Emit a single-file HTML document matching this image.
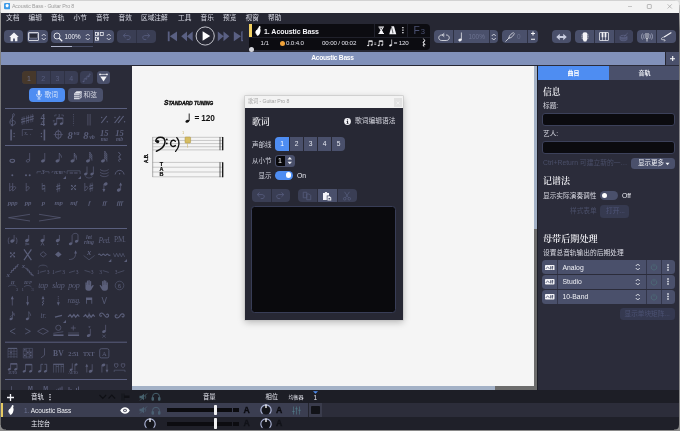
<!DOCTYPE html>
<html lang="zh-CN">
<head>
<meta charset="utf-8">
<title>Acoustic Bass - Guitar Pro 8</title>
<style>
*{box-sizing:border-box;margin:0;padding:0}
html,body{width:680px;height:431px;overflow:hidden;background:#262733}
body{position:relative;font-family:"Liberation Sans","Noto Sans CJK SC",sans-serif;font-size:7px;color:#e8e9f0;-webkit-font-smoothing:antialiased}
.abs,.abs-all *{position:absolute}
#app{position:absolute;left:0;top:0;width:680px;height:431px;overflow:hidden;will-change:transform}
#app div,#app span,#app svg{position:absolute}
.serif{font-family:"Liberation Serif","Noto Serif CJK SC",serif}
.t{white-space:nowrap;line-height:1}
/* title bar */
#titlebar{left:0;top:0;width:680px;height:12.500px;background:#f3f3f3;border-top:1px solid #d2d2d2}
/* toolbar */
#menubar{left:0;top:13px;width:680px;height:39px;background:#262733}
.btn{background:#4a506b;border-radius:4px;height:13px;top:30px}
.btn.dim{background:#3a3e54}
.sep{width:1px;background:#2e3143;top:30px;height:13px}
/* tab bar */
#tabbar{left:0;top:52px;width:665px;height:13px;background:#8191ba}
/* panels */
#left{left:0;top:65px;width:132px;height:325px;background:#2a2b38}
#score{left:132px;top:66px;width:402px;height:320px;background:#f5f5f5}
#right{left:537px;top:65px;width:143px;height:325px;background:#2b2c3a}
#bottom{left:0;top:390px;width:680px;height:41px;background:#1e1f27}
</style>
</head>
<body>
<div id="app">

<!-- ===== title bar ===== -->
<div id="titlebar">
  <svg style="left:3.800px;top:2.400px" width="6.300" height="6.300" viewBox="0 0 8 8"><rect width="8" height="8" rx="1.6" fill="#3d9be9"/><path d="M2 3.2a2 2 0 0 1 4 0c0 1-0.8 1.3-0.9 2.2H2.9C2.8 4.500 2 4.200 2 3.200z" fill="#fff"/></svg>
  <span class="t" style="left:12px;top:3.200px;font-size:5.300px;color:#9d9d9d;letter-spacing:-0.160px">Acoustic Bass - Guitar Pro 8</span>
  <svg style="left:620px;top:0" width="60" height="12" viewBox="0 0 60 12"><path d="M8 5.500h4" stroke="#b0b0b0" stroke-width="0.700" fill="none"/><rect x="27.300" y="3.500" width="4" height="4" rx="0.500" stroke="#a0a0a0" stroke-width="0.700" fill="none"/><path d="M47.600 3.300l4.200 4.200M51.800 3.300l-4.200 4.200" stroke="#a0a0a0" stroke-width="0.700" fill="none"/></svg>
</div>

<!-- ===== menu + toolbar ===== -->
<div id="menubar"></div>
<div id="menu" style="left:0;top:13px;width:340px;height:12px">
  <span class="t" style="left:6px;top:2.200px;font-size:6.700px;color:#d9dbe5">文档</span>
  <span class="t" style="left:28.5px;top:2.200px;font-size:6.700px;color:#d9dbe5">编辑</span>
  <span class="t" style="left:51px;top:2.200px;font-size:6.700px;color:#d9dbe5">音轨</span>
  <span class="t" style="left:73.5px;top:2.200px;font-size:6.700px;color:#d9dbe5">小节</span>
  <span class="t" style="left:96px;top:2.200px;font-size:6.700px;color:#d9dbe5">音符</span>
  <span class="t" style="left:118.5px;top:2.200px;font-size:6.700px;color:#d9dbe5">音效</span>
  <span class="t" style="left:141px;top:2.200px;font-size:6.700px;color:#d9dbe5">区域注解</span>
  <span class="t" style="left:178px;top:2.200px;font-size:6.700px;color:#d9dbe5">工具</span>
  <span class="t" style="left:200.5px;top:2.200px;font-size:6.700px;color:#d9dbe5">音乐</span>
  <span class="t" style="left:223px;top:2.200px;font-size:6.700px;color:#d9dbe5">预览</span>
  <span class="t" style="left:245.5px;top:2.200px;font-size:6.700px;color:#d9dbe5">视窗</span>
  <span class="t" style="left:268px;top:2.200px;font-size:6.700px;color:#d9dbe5">帮助</span>
</div>

<div id="toolbar" style="left:0;top:0;width:680px;height:52px">
  <!-- home -->
  <div class="btn" style="left:4px;width:19px"></div>
  <!-- layout -->
  <div class="btn" style="left:27px;width:21px"></div>
  <!-- zoom -->
  <div class="btn" style="left:51px;width:63px"></div>
  <div class="sep" style="left:93px"></div>
  <span class="t" style="left:64.500px;top:33.500px;font-size:6.300px;color:#f0f1f6">100%</span>
  <div style="left:51px;top:46px;width:21px;height:1px;background:#aeb4cc"></div>
  <div style="left:72px;top:46px;width:21px;height:1px;background:#454a62"></div>
  <!-- undo redo -->
  <div class="btn dim" style="left:117px;width:39px"></div>
  <div class="sep" style="left:136px"></div>
  <!-- loop / tempo -->
  <div class="btn" style="left:434px;width:64px"></div>
  <div class="sep" style="left:453px"></div>
  <div class="sep" style="left:489px"></div>
  <span class="t" style="left:468.500px;top:33.500px;font-size:6.400px;color:#6d7391">100%</span>
  <!-- tuning fork -->
  <div class="btn" style="left:502px;width:36px"></div>
  <div class="sep" style="left:527px"></div>
  <span class="t" style="left:517px;top:33.500px;font-size:6.400px;color:#6d7391">0</span>
  <!-- arrows -->
  <div class="btn" style="left:552px;width:19px"></div>
  <!-- instrument views -->
  <div class="btn" style="left:575px;width:58px"></div>
  <div class="sep" style="left:594px"></div>
  <div class="sep" style="left:614px"></div>
  <div style="left:615px;top:30px;width:18px;height:13px;background:#3e425a;border-radius:0 4px 4px 0"></div>
  <!-- tuner / line-in -->
  <div class="btn" style="left:637px;width:39px"></div>
  <div class="sep" style="left:656px"></div>

  <!-- toolbar icons -->
  <svg style="left:8.500px;top:31.500px" width="10" height="10" viewBox="0 0 20 20"><path d="M10 1L0.500 10h2.700v8.500h5V13h3.600v5.500h5V10h2.700z" fill="#f4f4f8"/></svg>
  <svg style="left:28px;top:32px" width="11" height="9" viewBox="0 0 22 18"><rect x="1" y="1" width="20" height="16" rx="1" stroke="#f4f4f8" stroke-width="1.600" fill="none"/><rect x="3.500" y="3.500" width="15" height="8.500" fill="#2a2c3a" stroke="#cfd2df" stroke-width="0.600"/></svg>
  <svg style="left:40.500px;top:32.500px" width="5.500" height="8" viewBox="0 0 11 16"><path d="M1.500 6l4-4 4 4M1.500 10l4 4 4-4" stroke="#f4f4f8" stroke-width="1.500" fill="none"/></svg>
  <svg style="left:52.500px;top:31.500px" width="10" height="10" viewBox="0 0 20 20"><circle cx="8" cy="8" r="6" stroke="#f4f4f8" stroke-width="1.700" fill="none"/><path d="M12.500 12.500l6 6" stroke="#f4f4f8" stroke-width="2.400"/></svg>
  <svg style="left:85px;top:32.500px" width="5.500" height="8" viewBox="0 0 11 16"><path d="M1.500 6l4-4 4 4M1.500 10l4 4 4-4" stroke="#f4f4f8" stroke-width="1.500" fill="none"/></svg>
  <svg style="left:95px;top:32px" width="9" height="9" viewBox="0 0 18 18"><rect x="1" y="1" width="6" height="6" stroke="#f4f4f8" stroke-width="1.500" fill="none"/><rect x="10.500" y="1" width="6" height="6" stroke="#f4f4f8" stroke-width="1.500" fill="none"/><rect x="1" y="10.500" width="6" height="6" stroke="#f4f4f8" stroke-width="1.500" fill="none"/><rect x="4" y="2.500" width="3" height="3" fill="#f4f4f8"/><rect x="4" y="12" width="3" height="3" fill="#f4f4f8"/></svg>
  <svg style="left:106px;top:32.500px" width="5.500" height="8" viewBox="0 0 11 16"><path d="M1.500 6l4-4 4 4M1.500 10l4 4 4-4" stroke="#f4f4f8" stroke-width="1.500" fill="none"/></svg>
  <svg style="left:121.500px;top:32px" width="10" height="9" viewBox="0 0 20 18"><path d="M7 3L2.500 7.200 7 11.500M3 7.200h9.500c5.500 0 5.500 8-0.500 8H9.500" stroke="#585e80" stroke-width="1.700" fill="none"/></svg>
  <svg style="left:141px;top:32px" width="10" height="9" viewBox="0 0 20 18"><path d="M13 3l4.500 4.200L13 11.500M17 7.200H7.500c-5.500 0-5.500 8 0.500 8h2.500" stroke="#585e80" stroke-width="1.700" fill="none"/></svg>
  <!-- transport -->
  <svg style="left:167px;top:30.500px" width="77" height="11" viewBox="0 0 77 11"><g fill="#5a6083"><rect x="0.800" y="0.500" width="1.800" height="9.700"/><path d="M10 0.500v9.700L2.800 5.350z"/><path d="M20 0.500v9.700L14.200 5.350zM25.700 0.500v9.700L19.900 5.350z"/><path d="M50.800 0.500v9.700L56.600 5.350zM56.500 0.500v9.700L62.300 5.350z"/><path d="M66.800 0.500v9.700L74 5.350z"/><rect x="74.200" y="0.500" width="1.800" height="9.700"/></g></svg>
  <svg style="left:195px;top:26px" width="20" height="20" viewBox="0 0 20 20"><circle cx="10.200" cy="10" r="9.100" stroke="#eceef4" stroke-width="0.800" fill="none"/><path d="M7.600 5.200v9.600l7.600-4.800z" fill="#fff"/></svg>
  <!-- loop -->
  <svg style="left:437.500px;top:31.500px" width="12" height="10" viewBox="0 0 24 20"><path d="M13 6H7.500C-0.500 6 -0.500 17 7.500 17h9c8 0 8-11 0-11h-0.500" stroke="#f4f4f8" stroke-width="1.500" fill="none"/><path d="M12.500 2.500L8.500 6l4 3.500" stroke="#f4f4f8" stroke-width="1.500" fill="none"/></svg>
  <svg style="left:458px;top:31.500px" width="6" height="10" viewBox="0 0 12 20"><ellipse cx="4" cy="16" rx="3.400" ry="2.600" transform="rotate(-20 4 16)" fill="#f4f4f8"/><path d="M6.800 16V1" stroke="#f4f4f8" stroke-width="1.400"/></svg>
  <svg style="left:491px;top:32.500px" width="5.500" height="8" viewBox="0 0 11 16"><path d="M1.500 6l4-4 4 4M1.500 10l4 4 4-4" stroke="#f4f4f8" stroke-width="1.500" fill="none"/></svg>
  <!-- fork -->
  <svg style="left:504.500px;top:31.500px" width="10" height="10" viewBox="0 0 20 20"><path d="M1.500 18.500L8 12M8 12c-1-3 3-8 8.500-10.500M8 12c3 1 8-3 10.500-8.500" stroke="#f4f4f8" stroke-width="1.500" fill="none" stroke-linecap="round"/></svg>
  <svg style="left:529.500px;top:31px" width="6" height="11" viewBox="0 0 12 22"><path d="M6 1v8M2 5h8M2 16.500h8" stroke="#f4f4f8" stroke-width="2.200"/></svg>
  <!-- arrows -->
  <svg style="left:556px;top:32.500px" width="11" height="8" viewBox="0 0 22 16"><path d="M0.500 8l7-6.500v4.300h7V1.500L21.500 8l-7 6.500v-4.300h-7v4.300z" fill="#c9cde0"/></svg>
  <!-- guitar head -->
  <svg style="left:580.500px;top:31.500px" width="8" height="10" viewBox="0 0 16 20"><path d="M4 1.500c2.500-1.500 5.500-1.500 8 0l1 3.500c-1 3-1 6 0 8.500l-2.500 5.500h-5L3 13.500c1-2.500 1-5.500 0-8.500z" fill="#f4f4f8"/><path d="M1 6h2M1 9h2M1 12h2M13 6h2M13 9h2M13 12h2" stroke="#f4f4f8" stroke-width="1.300"/></svg>
  <svg style="left:599px;top:32px" width="10" height="9" viewBox="0 0 20 18"><rect x="1" y="1" width="18" height="16" rx="1" stroke="#f4f4f8" stroke-width="1.500" fill="none"/><path d="M7 1v16M13 1v16" stroke="#f4f4f8" stroke-width="1.200"/><rect x="5.300" y="1" width="3.400" height="9.500" fill="#f4f4f8"/><rect x="11.300" y="1" width="3.400" height="9.500" fill="#f4f4f8"/></svg>
  <svg style="left:618.500px;top:31.500px" width="10" height="10" viewBox="0 0 20 20"><ellipse cx="9" cy="9.500" rx="7" ry="3" stroke="#5e6487" stroke-width="1.400" fill="none"/><path d="M2 9.500v5c0 4 14 4 14 0v-5" stroke="#5e6487" stroke-width="1.400" fill="#5e6487" fill-opacity="0.500"/><path d="M10 9l7.500-7" stroke="#5e6487" stroke-width="1.400"/></svg>
  <!-- tuner -->
  <svg style="left:640.500px;top:31.500px" width="12" height="10" viewBox="0 0 24 20"><path d="M10 2v9.500a2 2 0 0 0 4 0V2M12 13.500V19" stroke="#f4f4f8" stroke-width="1.500" fill="none"/><path d="M6.500 4.500c-1.500 2.500-1.500 6.500 0 9M3 3c-2.500 3.500-2.500 8.500 0 12M17.500 4.500c1.500 2.500 1.500 6.500 0 9M21 3c2.500 3.500 2.500 8.500 0 12" stroke="#c9cde0" stroke-width="1.200" fill="none"/></svg>
  <svg style="left:660px;top:31.500px" width="12" height="10" viewBox="0 0 24 20"><path d="M22 1.500L9 9.500" stroke="#f4f4f8" stroke-width="2.200" stroke-linecap="round"/><path d="M9.500 9.500c-4 1-7 2.500-7 4.500 0 2.500 6 0.500 7.500 2 1 1-0.500 2.500-2.500 2" stroke="#f4f4f8" stroke-width="1.300" fill="none"/></svg>
  <!-- tab + -->
</div>

<!-- ===== LCD ===== -->
<div id="lcd" style="left:249px;top:24px;width:181px;height:26px;background:#0c0c11;border-radius:0 4px 4px 0">
  <div style="left:0;top:0;width:2.500px;height:12.500px;background:#f2d060"></div>
  <div style="left:0;top:13px;width:181px;height:1px;background:#20212b"></div>
  <div style="left:125px;top:0;width:1px;height:13px;background:#20212b"></div>
  <div style="left:158px;top:0;width:1px;height:13px;background:#20212b"></div>

  <svg style="left:6px;top:1.500px" width="6" height="10" viewBox="0 0 12 20"><path d="M8.500 0.300c1.400-0.300 2.600 0.600 2.500 2l-0.700 3c1.200 2 1 4.600 0.400 6.800-0.600 2.400-1.400 4.400-2.800 6-1.200 1.300-3 1.500-4.400 0.800l0.900-1.500-2.400 0.300 1.200-2-2.600 0.100 1.500-2-2.300-0.300 2-1.800-1.800-0.700 2.600-1.400-1-1 2.800-0.900 0.600-2.400 1.800-1.200 0.400-2.300z" fill="#fff"/></svg>
  <svg style="left:128.500px;top:2px" width="6.500" height="8.500" viewBox="0 0 13 17"><path d="M1 0.800h11v2.400H1zM1 13.800h11v2.400H1z" fill="#f4f4f8"/><path d="M2.500 3.200h8c0 3-2.500 4-2.500 5.300s2.500 2.300 2.500 5.300h-8c0-3 2.500-4 2.500-5.300S2.500 6.200 2.500 3.200z" fill="#f4f4f8"/><path d="M4.500 4.500h4L6.500 7z" fill="#0c0c11"/></svg>
  <svg style="left:140px;top:2px" width="7.500" height="8.500" viewBox="0 0 15 17"><path d="M5 0.500h5l4.500 16h-14z" fill="#f4f4f8"/><path d="M7.500 12L5 2" stroke="#0c0c11" stroke-width="1.200"/><path d="M6 13.500h3" stroke="#0c0c11" stroke-width="1.200"/></svg>
  <svg style="left:152.800px;top:3px" width="1.800" height="6.500" viewBox="0 0 3.600 13"><rect x="0.500" y="0" width="2.600" height="2.600" fill="#f4f4f8"/><rect x="0.500" y="5" width="2.600" height="2.600" fill="#f4f4f8"/><rect x="0.500" y="10" width="2.600" height="2.600" fill="#f4f4f8"/></svg>
  <svg style="left:118px;top:15.500px" width="17" height="7" viewBox="0 0 34 14"><g fill="#f4f4f8" stroke="#f4f4f8"><path d="M3.500 11V1.500h7V10" stroke-width="1.300" fill="none"/><path d="M3.500 1.500h7v2h-7z" stroke="none"/><ellipse cx="2.200" cy="11.200" rx="2" ry="1.500" stroke="none"/><ellipse cx="9.200" cy="10.200" rx="2" ry="1.500" stroke="none"/><path d="M14.500 6h4M14.500 9h4" stroke-width="1.200"/><path d="M24.500 11V1.500h7V10" stroke-width="1.300" fill="none"/><path d="M24.500 1.500h7v2h-7z" stroke="none"/><ellipse cx="23.200" cy="11.200" rx="2" ry="1.500" stroke="none"/><ellipse cx="30.200" cy="10.200" rx="2" ry="1.500" stroke="none"/></g></svg>
  <svg style="left:139.500px;top:15px" width="4" height="8" viewBox="0 0 8 16"><ellipse cx="3" cy="12.800" rx="2.700" ry="2" transform="rotate(-20 3 12.800)" fill="#f4f4f8"/><path d="M5.300 12.800V1" stroke="#f4f4f8" stroke-width="1.300"/></svg>
  <svg style="left:172.800px;top:14.300px" width="4.400" height="9.800" viewBox="0 0 8 18"><path d="M2.500 1l3 4-2.500 3.500 3 4c-2-0.800-4 0-2 3.500-3-2-3-5 0-4.500L1.500 8 4.500 4.500z" fill="#f4f4f8" stroke="#f4f4f8" stroke-width="0.800" stroke-linejoin="round"/></svg>
  <span class="t" style="left:15px;top:3.500px;font-size:7px;font-weight:bold;color:#f4f4f8;letter-spacing:-0.050px">1. Acoustic Bass</span>
  <span class="t" style="left:11.500px;top:16px;font-size:6.100px;color:#e0e1ea">1/1</span>
  <div style="left:30.500px;top:16.500px;width:5px;height:5px;border-radius:50%;background:#f0a23a"></div>
  <span class="t" style="left:37px;top:16px;font-size:6.200px;color:#e0e1ea;letter-spacing:-0.150px">0.0:4.0</span>
  <span class="t" style="left:73px;top:16px;font-size:6.200px;color:#e0e1ea;letter-spacing:-0.150px">00:00 / 00:02</span>
  <span class="t" style="left:144.700px;top:16px;font-size:6.200px;color:#e0e1ea;letter-spacing:-0.150px">= 120</span>
  <span class="t" style="left:164.500px;top:1.800px;font-size:10.300px;color:#4b5172">F</span>
  <span class="t" style="left:171.700px;top:4.400px;font-size:7.600px;color:#4b5172">3</span>
</div>
<div style="left:249px;top:46.500px;width:5px;height:5px;border-radius:50%;background:#d4d5dc"></div>
<div style="left:241.500px;top:31px;width:1.500px;height:9px;background:#3f4460;border-radius:1px"></div>

<!-- ===== tab bar ===== -->
<div id="tabbar"><span class="t" style="left:0;width:665px;text-align:center;top:3.200px;font-size:6.700px;font-weight:bold;color:#fff;letter-spacing:-0.280px">Acoustic Bass</span></div>
<div style="left:665px;top:52px;width:15px;height:13px;background:#4a506b;border-left:1px solid #262733"></div>
<svg style="left:670px;top:56px" width="5.400" height="5.400" viewBox="0 0 5 5"><path d="M2.500 0v5M0 2.500h5" stroke="#fff" stroke-width="1"/></svg>

<!-- ===== left palette ===== -->
<div id="left"></div>
<div id="lp" style="left:0;top:0;width:132px;height:390px;overflow:hidden">
  <div style="left:22px;top:71px;width:56px;height:13px;background:#393d54;border-radius:3.500px"></div>
  <div style="left:22px;top:71px;width:14px;height:13px;background:#46382b;border-radius:3.500px 0 0 3.500px"></div>
  <div style="left:36px;top:71px;width:0.700px;height:13px;background:#2f3244"></div>
  <div style="left:50.300px;top:71px;width:0.700px;height:13px;background:#2f3244"></div>
  <div style="left:64.300px;top:71px;width:0.700px;height:13px;background:#2f3244"></div>
  <span class="t" style="left:22px;width:14px;text-align:center;top:74.500px;font-size:7px;color:#6a6e88">1</span>
  <span class="t" style="left:36px;width:14.500px;text-align:center;top:74.500px;font-size:7px;color:#575d7e">2</span>
  <span class="t" style="left:50.500px;width:14px;text-align:center;top:74.500px;font-size:7px;color:#575d7e">3</span>
  <span class="t" style="left:64.500px;width:13.500px;text-align:center;top:74.500px;font-size:7px;color:#575d7e">4</span>
  <div style="left:80px;top:71px;width:13px;height:13px;background:#393d54;border-radius:3.500px"></div>
  <svg style="left:82px;top:72.500px" width="9" height="10" viewBox="0 0 9 10"><path d="M2.200 8.300V5.800l2-0.800M4.800 5.800V3.400l2-0.800M7.300 3.400V0.800l1.500 0.600" stroke="#575d7e" stroke-width="0.700" fill="none"/><ellipse cx="1.500" cy="8.500" rx="0.900" ry="0.650" fill="#575d7e"/><ellipse cx="4.100" cy="6" rx="0.900" ry="0.650" fill="#575d7e"/><ellipse cx="6.600" cy="3.600" rx="0.900" ry="0.650" fill="#575d7e"/></svg>
  <div style="left:97px;top:71px;width:13px;height:13px;background:#4a506b;border-radius:3.500px"></div>
  <svg style="left:99px;top:73px" width="9" height="9" viewBox="0 0 18 18"><path d="M2 2.800h14" stroke="#f4f4f8" stroke-width="1.400"/><circle cx="2" cy="2.800" r="1.700" fill="#f4f4f8"/><circle cx="16" cy="2.800" r="1.700" fill="#f4f4f8"/><path d="M2.500 6.800h13L9 17z" fill="#f4f4f8"/></svg>
  <div style="left:29px;top:88px;width:35.500px;height:13.500px;background:#4e8df2;border-radius:4px"></div>
  <svg style="left:35.500px;top:90px" width="6" height="9.500" viewBox="0 0 12 19"><rect x="3.500" y="0.500" width="5" height="10.500" rx="2.500" fill="#dfe9fb"/><path d="M1.200 8v1.500a4.800 4.800 0 0 0 9.600 0V8" stroke="#dfe9fb" stroke-width="1.500" fill="none"/><path d="M6 14v3.500M3 18h6" stroke="#dfe9fb" stroke-width="1.600"/></svg>
  <span class="t" style="left:44.500px;top:91.500px;font-size:6.700px;color:#d6e4fb">歌词</span>
  <div style="left:68px;top:88px;width:35px;height:13.500px;background:#4a506b;border-radius:4px"></div>
  <svg style="left:72.500px;top:89.500px" width="10" height="10" viewBox="0 0 20 20"><path d="M2 7l5-4.500h11L13 7z" fill="#e6e7ee"/><path d="M13 7l5-4.500v12L13 18.500z" fill="#b9bccb"/><rect x="2" y="7" width="11" height="11.500" fill="#d4d6e0"/><path d="M2 10.800h11M2 14.600h11" stroke="#4a506b" stroke-width="1.300"/><path d="M13 11l5-4M13 14.800l5-4" stroke="#4a506b" stroke-width="1"/></svg>
  <span class="t" style="left:83.500px;top:91.500px;font-size:6.700px;color:#d4d6e0">和弦</span>
<!--PALETTE--><svg style="left:0;top:0" width="132" height="390" viewBox="0 0 132 390">
<rect x="5" y="108.0" width="122" height="1" fill="#5a5f7e"/>
<rect x="5" y="145.0" width="122" height="1" fill="#5a5f7e"/>
<rect x="5" y="228.0" width="122" height="1" fill="#5a5f7e"/>
<rect x="5" y="341.7" width="122" height="1" fill="#5a5f7e"/>
<rect x="5" y="379.0" width="122" height="1" fill="#5a5f7e"/>
<path d="M12.5 126c-1.5 0.3-1.800-1.500-0.400-1.700M12.5 126V115.500c0-2 2-3 1.800-0.500-0.200 2.500-4.500 4-4.500 7 0 2 1.500 3 3 3s2.500-1 2.500-2.300c0-1.500-1.200-2.300-2.400-2.300-1.300 0-2 1-2 2" stroke="#5b5f7a" stroke-width="0.75" fill="none" />
<path d="M22.200000000000003 116.9v8M24.0 116.3v8" stroke="#5b5f7a" stroke-width="0.55" fill="none" />
<path d="M21.1 119.7l4-1.200M21.1 122.3l4-1.200" stroke="#5b5f7a" stroke-width="1.0" fill="none" />
<path d="M26.700000000000003 115.7v8M28.5 115.1v8" stroke="#5b5f7a" stroke-width="0.55" fill="none" />
<path d="M25.6 118.5l4-1.200M25.6 121.1l4-1.200" stroke="#5b5f7a" stroke-width="1.0" fill="none" />
<path d="M30.900000000000002 114.5v8M32.7 113.89999999999999v8" stroke="#5b5f7a" stroke-width="0.55" fill="none" />
<path d="M29.8 117.3l4-1.200M29.8 119.89999999999999l4-1.200" stroke="#5b5f7a" stroke-width="1.0" fill="none" />
<text x="42.7" y="120" font-family='"Liberation Serif",serif' font-size="9.2" font-weight="bold" font-style="normal" text-anchor="middle" fill="#5b5f7a" >4</text>
<text x="42.7" y="126.3" font-family='"Liberation Serif",serif' font-size="9.2" font-weight="bold" font-style="normal" text-anchor="middle" fill="#5b5f7a" >4</text>
<ellipse cx="55.3" cy="124.2" rx="1.7" ry="1.2" transform="rotate(-22 55.3 124.2)" fill="#5b5f7a"/>
<ellipse cx="61.5" cy="123.6" rx="1.7" ry="1.2" transform="rotate(-22 61.5 123.6)" fill="#5b5f7a"/>
<path d="M56.699999999999996 124V118h6.2v5.400" stroke="#5b5f7a" stroke-width="0.7" fill="none" />
<path d="M56.699999999999996 118.500h6.200" stroke="#5b5f7a" stroke-width="1.4" fill="none" />
<path d="M54.8 116.500v-1.500h2M63.3 116.500v-1.500h-2" stroke="#5b5f7a" stroke-width="0.6" fill="none" />
<text x="59.099999999999994" y="116.6" font-family='"Liberation Serif",serif' font-size="4" font-weight="bold" font-style="italic" text-anchor="middle" fill="#5b5f7a" >3</text>
<path d="M52.8 120.500h2M52.8 121.800h2" stroke="#5b5f7a" stroke-width="0.5" fill="none" />
<path d="M73.5 114v11.500" stroke="#5b5f7a" stroke-width="0.6" fill="none" stroke-dasharray="1.2 1"/>
<path d="M87.9 114v11.500M90.1 114v11.500" stroke="#5b5f7a" stroke-width="0.7" fill="none" />
<path d="M101.3 123l5.500-7" stroke="#5b5f7a" stroke-width="1.2" fill="none" />
<circle cx="101.7" cy="117.500" r="0.7" fill="#5b5f7a"/><circle cx="107.3" cy="121.800" r="0.7" fill="#5b5f7a"/>
<path d="M114.6 123l5.500-7M118.1 123l5.500-7" stroke="#5b5f7a" stroke-width="1.2" fill="none" />
<circle cx="115.0" cy="117.500" r="0.7" fill="#5b5f7a"/><circle cx="124.6" cy="121.800" r="0.7" fill="#5b5f7a"/>
<path d="M11.100000000000001 129.500v11" stroke="#5b5f7a" stroke-width="1.6" fill="none" />
<circle cx="14.100000000000001" cy="133.500" r="0.65" fill="#5b5f7a"/><circle cx="14.100000000000001" cy="136.500" r="0.65" fill="#5b5f7a"/>
<path d="M22.3 136v-6.500h10.500" stroke="#5b5f7a" stroke-width="0.6" fill="none" />
<text x="26.400000000000002" y="135" font-family='"Liberation Serif",serif' font-size="5.5" font-weight="normal" font-style="normal" text-anchor="middle" fill="#5b5f7a" >x.</text>
<text x="30.400000000000002" y="135" font-family='"Liberation Serif",serif' font-size="5.5" font-weight="normal" font-style="normal" text-anchor="middle" fill="#5b5f7a" >.</text>
<path d="M44.4 129.500v11" stroke="#5b5f7a" stroke-width="1.6" fill="none" />
<circle cx="41.4" cy="133.500" r="0.65" fill="#5b5f7a"/><circle cx="41.4" cy="136.500" r="0.65" fill="#5b5f7a"/>
<ellipse cx="58.3" cy="134.600" rx="3" ry="3.800" fill="none" stroke="#5b5f7a" stroke-width="0.9"/>
<path d="M58.3 129.500v10.200M53.699999999999996 134.600h9.200" stroke="#5b5f7a" stroke-width="0.7" fill="none" />
<text x="70.19999999999999" y="139.2" font-family='"Liberation Serif",serif' font-size="10.5" font-weight="bold" font-style="italic" text-anchor="middle" fill="#5b5f7a" >8</text>
<text x="76.6" y="134.8" font-family='"Liberation Serif",serif' font-size="6" font-weight="bold" font-style="italic" text-anchor="middle" fill="#5b5f7a" >va</text>
<text x="85.8" y="139.2" font-family='"Liberation Serif",serif' font-size="10.5" font-weight="bold" font-style="italic" text-anchor="middle" fill="#5b5f7a" >8</text>
<text x="92" y="139.2" font-family='"Liberation Serif",serif' font-size="6" font-weight="bold" font-style="italic" text-anchor="middle" fill="#5b5f7a" >vb</text>
<text x="104.3" y="135.8" font-family='"Liberation Serif",serif' font-size="8.5" font-weight="bold" font-style="italic" text-anchor="middle" fill="#5b5f7a" >15</text>
<text x="104.3" y="141" font-family='"Liberation Serif",serif' font-size="5.6" font-weight="bold" font-style="italic" text-anchor="middle" fill="#5b5f7a" >ma</text>
<text x="119.6" y="135.8" font-family='"Liberation Serif",serif' font-size="8.5" font-weight="bold" font-style="italic" text-anchor="middle" fill="#5b5f7a" >15</text>
<text x="119.6" y="141" font-family='"Liberation Serif",serif' font-size="5.6" font-weight="bold" font-style="italic" text-anchor="middle" fill="#5b5f7a" >mb</text>
<ellipse cx="12.3" cy="160.800" rx="2.300" ry="1.600" fill="none" stroke="#5b5f7a" stroke-width="1.1"/>
<ellipse cx="27.900000000000002" cy="160.8" rx="1.8" ry="1.2" transform="rotate(-22 27.900000000000002 160.8)" fill="none" stroke="#5b5f7a" stroke-width="0.7"/>
<path d="M29.650000000000002 160.4V153" stroke="#5b5f7a" stroke-width="0.7" fill="none" />
<ellipse cx="43" cy="160.8" rx="2.1" ry="1.5" transform="rotate(-22 43 160.8)" fill="#5b5f7a"/>
<path d="M44.75 160.4V153" stroke="#5b5f7a" stroke-width="0.7" fill="none" />
<ellipse cx="57.5" cy="160.8" rx="2.1" ry="1.5" transform="rotate(-22 57.5 160.8)" fill="#5b5f7a"/>
<path d="M59.25 160.4V153" stroke="#5b5f7a" stroke-width="0.7" fill="none" />
<path d="M59.25 153.0c0.3 1.6 2.6 2.2 2.2 4.6" stroke="#5b5f7a" stroke-width="0.8" fill="none" />
<ellipse cx="72.5" cy="160.8" rx="2.1" ry="1.5" transform="rotate(-22 72.5 160.8)" fill="#5b5f7a"/>
<path d="M74.25 160.4V153" stroke="#5b5f7a" stroke-width="0.7" fill="none" />
<path d="M74.25 153.0c0.3 1.6 2.6 2.2 2.2 4.6" stroke="#5b5f7a" stroke-width="0.8" fill="none" />
<path d="M74.25 155.0c0.3 1.6 2.6 2.2 2.2 4.6" stroke="#5b5f7a" stroke-width="0.8" fill="none" />
<ellipse cx="88" cy="160.8" rx="2.1" ry="1.5" transform="rotate(-22 88 160.8)" fill="#5b5f7a"/>
<path d="M89.75 160.4V152" stroke="#5b5f7a" stroke-width="0.7" fill="none" />
<path d="M89.75 152.0c0.3 1.6 2.6 2.2 2.2 4.6" stroke="#5b5f7a" stroke-width="0.8" fill="none" />
<path d="M89.75 154.0c0.3 1.6 2.6 2.2 2.2 4.6" stroke="#5b5f7a" stroke-width="0.8" fill="none" />
<path d="M89.75 156.0c0.3 1.6 2.6 2.2 2.2 4.6" stroke="#5b5f7a" stroke-width="0.8" fill="none" />
<ellipse cx="103.0" cy="160.8" rx="2.1" ry="1.5" transform="rotate(-22 103.0 160.8)" fill="#5b5f7a"/>
<path d="M104.75 160.4V151" stroke="#5b5f7a" stroke-width="0.7" fill="none" />
<path d="M104.75 151.0c0.3 1.6 2.6 2.2 2.2 4.6" stroke="#5b5f7a" stroke-width="0.8" fill="none" />
<path d="M104.75 153.0c0.3 1.6 2.6 2.2 2.2 4.6" stroke="#5b5f7a" stroke-width="0.8" fill="none" />
<path d="M104.75 155.0c0.3 1.6 2.6 2.2 2.2 4.6" stroke="#5b5f7a" stroke-width="0.8" fill="none" />
<path d="M104.75 157.0c0.3 1.6 2.6 2.2 2.2 4.6" stroke="#5b5f7a" stroke-width="0.8" fill="none" />
<path d="M118.39999999999999 152l2.200 2.600-2 2.400 2.300 2.400c-1.800-0.600-3.300 0.300-1.400 2.400" stroke="#5b5f7a" stroke-width="1.0" fill="none" stroke-linejoin="round"/>
<circle cx="12.3" cy="175.300" r="1" fill="#5b5f7a"/>
<circle cx="26.0" cy="175.300" r="1" fill="#5b5f7a"/><circle cx="29.700000000000003" cy="175.300" r="1" fill="#5b5f7a"/>
<path d="M37 173.500v-1.800h4M49 173.500v-1.800h-4" stroke="#5b5f7a" stroke-width="0.6" fill="none" />
<text x="43" y="174" font-family='"Liberation Serif",serif' font-size="6.5" font-weight="bold" font-style="italic" text-anchor="middle" fill="#5b5f7a" >3</text>
<path d="M52.0 173v-1.500h1.500M65.0 173v-1.500h-1.500" stroke="#5b5f7a" stroke-width="0.5" fill="none" />
<text x="58.5" y="173.6" font-family='"Liberation Serif",serif' font-size="5.2" font-weight="bold" font-style="italic" text-anchor="middle" fill="#5b5f7a" >n:m</text>
<path d="M63 179h3v-3z" fill="#5b5f7a" />
<path d="M67.1 174v-3.200h13v3.200" stroke="#5b5f7a" stroke-width="0.6" fill="none" />
<path d="M69.6 173h3.500M74.1 173h3.500" stroke="#5b5f7a" stroke-width="0.9" fill="none" />
<path d="M78 179h3v-3z" fill="#5b5f7a" />
<ellipse cx="85.7" cy="174" rx="1.7" ry="1.3" transform="rotate(-22 85.7 174)" fill="#5b5f7a"/>
<ellipse cx="92" cy="174" rx="1.7" ry="1.3" transform="rotate(-22 92 174)" fill="#5b5f7a"/>
<path d="M87 174v-7.500M93.4 174v-7.500" stroke="#5b5f7a" stroke-width="0.7" fill="none" />
<path d="M85.5 176.500c2 2 5 2 7 0" stroke="#5b5f7a" stroke-width="0.6" fill="none" />
<path d="M100.1 169.5c2.500 2 6 2 8.500 0" stroke="#5b5f7a" stroke-width="0.7" fill="none" />
<path d="M100.1 172.3c2.500 2 6 2 8.500 0" stroke="#5b5f7a" stroke-width="0.7" fill="none" />
<path d="M100.1 175.1c2.500 2 6 2 8.500 0" stroke="#5b5f7a" stroke-width="0.7" fill="none" />
<path d="M115.1 174.500c1-5.500 8-5.500 9 0" stroke="#5b5f7a" stroke-width="0.9" fill="none" />
<circle cx="119.6" cy="173.800" r="0.7" fill="#5b5f7a"/>
<path d="M9.700000000000001 183v8.0c1.5-1.0 3.2-2.2 3.0-3.6c-0.2-1.2-2.0-1.0-3.0 0.2" stroke="#5b5f7a" stroke-width="0.7" fill="none" />
<path d="M12.700000000000001 183v8.0c1.5-1.0 3.2-2.2 3.0-3.6c-0.2-1.2-2.0-1.0-3.0 0.2" stroke="#5b5f7a" stroke-width="0.7" fill="none" />
<path d="M26.200000000000003 183v8.0c1.5-1.0 3.2-2.2 3.0-3.6c-0.2-1.2-2.0-1.0-3.0 0.2" stroke="#5b5f7a" stroke-width="0.7" fill="none" />
<path d="M42.2 183v6.500M44.8 185.500v6.500" stroke="#5b5f7a" stroke-width="0.6" fill="none" />
<path d="M42.2 186l2.600-0.800M42.2 189.300l2.600-0.800" stroke="#5b5f7a" stroke-width="1.1" fill="none" />
<path d="M57.4 183.7v8.600M59.199999999999996 182.9v8.600" stroke="#5b5f7a" stroke-width="0.55" fill="none" />
<path d="M56.3 186.6l4-1.200M56.3 189.4l4-1.200" stroke="#5b5f7a" stroke-width="1.0" fill="none" />
<path d="M71.8 185.800l3.400 3.400M75.2 185.800l-3.400 3.400" stroke="#5b5f7a" stroke-width="0.8" fill="none" />
<rect x="70.95" y="184.95" width="1.500" height="1.500" fill="#5b5f7a"/>
<rect x="74.55" y="184.95" width="1.500" height="1.500" fill="#5b5f7a"/>
<rect x="70.95" y="188.55" width="1.500" height="1.500" fill="#5b5f7a"/>
<rect x="74.55" y="188.55" width="1.500" height="1.500" fill="#5b5f7a"/>
<path d="M84.8 183v8.0c1.5-1.0 3.2-2.2 3.0-3.6c-0.2-1.2-2.0-1.0-3.0 0.2" stroke="#5b5f7a" stroke-width="0.7" fill="none" />
<path d="M90.3 183.39999999999998v8.600M92.10000000000001 182.6v8.600" stroke="#5b5f7a" stroke-width="0.55" fill="none" />
<path d="M89.2 186.29999999999998l4-1.200M89.2 189.1l4-1.200" stroke="#5b5f7a" stroke-width="1.0" fill="none" />
<ellipse cx="105.7" cy="184" rx="2" ry="1.5" transform="rotate(-22 105.7 184)" fill="#5b5f7a"/>
<path d="M103.89999999999999 184v7.500" stroke="#5b5f7a" stroke-width="0.7" fill="none" />
<path d="M102.39999999999999 189h3l-1.500 3z" fill="#5b5f7a" />
<ellipse cx="118.8" cy="190" rx="2" ry="1.5" transform="rotate(-22 118.8 190)" fill="#5b5f7a"/>
<path d="M120.6 190v-7" stroke="#5b5f7a" stroke-width="0.7" fill="none" />
<path d="M119.1 185.500h3l-1.500-3z" fill="#5b5f7a" />
<text x="12.600000000000001" y="204.6" font-family='"Liberation Serif",serif' font-size="6.8" font-weight="bold" font-style="italic" text-anchor="middle" fill="#5b5f7a" letter-spacing="-0.2">ppp</text>
<text x="27.900000000000002" y="204.6" font-family='"Liberation Serif",serif' font-size="6.8" font-weight="bold" font-style="italic" text-anchor="middle" fill="#5b5f7a" letter-spacing="-0.2">pp</text>
<text x="43.3" y="204.6" font-family='"Liberation Serif",serif' font-size="6.8" font-weight="bold" font-style="italic" text-anchor="middle" fill="#5b5f7a" letter-spacing="-0.2">p</text>
<text x="58.599999999999994" y="204.6" font-family='"Liberation Serif",serif' font-size="6.8" font-weight="bold" font-style="italic" text-anchor="middle" fill="#5b5f7a" letter-spacing="-0.2">mp</text>
<text x="73.8" y="204.6" font-family='"Liberation Serif",serif' font-size="6.8" font-weight="bold" font-style="italic" text-anchor="middle" fill="#5b5f7a" letter-spacing="-0.2">mf</text>
<text x="89.2" y="204.6" font-family='"Liberation Serif",serif' font-size="6.8" font-weight="bold" font-style="italic" text-anchor="middle" fill="#5b5f7a" letter-spacing="-0.2">f</text>
<text x="104.5" y="204.6" font-family='"Liberation Serif",serif' font-size="6.8" font-weight="bold" font-style="italic" text-anchor="middle" fill="#5b5f7a" letter-spacing="-0.2">ff</text>
<text x="119.8" y="204.6" font-family='"Liberation Serif",serif' font-size="6.8" font-weight="bold" font-style="italic" text-anchor="middle" fill="#5b5f7a" letter-spacing="-0.2">fff</text>
<path d="M30 214.300L8.500 217.700L30 221" stroke="#5b5f7a" stroke-width="0.7" fill="none" />
<path d="M39 214.300L60.500 217.700L39 221" stroke="#5b5f7a" stroke-width="0.7" fill="none" />
<ellipse cx="12.3" cy="241" rx="2.1" ry="1.6" transform="rotate(-22 12.3 241)" fill="#5b5f7a"/>
<path d="M14.100000000000001 241v-6" stroke="#5b5f7a" stroke-width="0.7" fill="none" />
<path d="M9.100000000000001 237.500c-1.200 2-1.200 4.500 0 6.500M16.1 237.500c1.200 2 1.200 4.500 0 6.500" stroke="#5b5f7a" stroke-width="0.7" fill="none" />
<ellipse cx="27.0" cy="240.5" rx="2" ry="1.5" transform="rotate(-22 27.0 240.5)" fill="#5b5f7a"/>
<path d="M28.700000000000003 240.500v-5.500" stroke="#5b5f7a" stroke-width="0.7" fill="none" />
<path d="M25.0 243.200l4.200 0.900-4.200 0.900" stroke="#5b5f7a" stroke-width="0.6" fill="none" />
<ellipse cx="42.4" cy="240.5" rx="2" ry="1.5" transform="rotate(-22 42.4 240.5)" fill="#5b5f7a"/>
<path d="M44.1 240.500v-5.500" stroke="#5b5f7a" stroke-width="0.7" fill="none" />
<path d="M41 245.500l1.500-3 1.500 3" stroke="#5b5f7a" stroke-width="0.7" fill="none" />
<ellipse cx="57.699999999999996" cy="240.5" rx="2" ry="1.5" transform="rotate(-22 57.699999999999996 240.5)" fill="#5b5f7a"/>
<path d="M59.4 240.500v-5.500" stroke="#5b5f7a" stroke-width="0.7" fill="none" />
<circle cx="57.699999999999996" cy="244.300" r="0.7" fill="#5b5f7a"/>
<ellipse cx="70.6" cy="243.8" rx="1.8" ry="1.3" transform="rotate(-22 70.6 243.8)" fill="#5b5f7a"/>
<ellipse cx="76.6" cy="241.3" rx="1.8" ry="1.3" transform="rotate(-22 76.6 241.3)" fill="#5b5f7a"/>
<path d="M72.1 243.500v-8M78.0 241v-6" stroke="#5b5f7a" stroke-width="0.7" fill="none" />
<path d="M72.1 235.500c1-2.500 5-3 6-0.500" stroke="#5b5f7a" stroke-width="0.7" fill="none" />
<text x="89" y="238.8" font-family='"Liberation Serif",serif' font-size="5.8" font-weight="bold" font-style="italic" text-anchor="middle" fill="#5b5f7a" >let</text>
<text x="89" y="243.8" font-family='"Liberation Serif",serif' font-size="5.8" font-weight="bold" font-style="italic" text-anchor="middle" fill="#5b5f7a" >ring</text>
<text x="104.3" y="243" font-family='"Liberation Serif",serif' font-size="7.4" font-weight="normal" font-style="italic" text-anchor="middle" fill="#5b5f7a" letter-spacing="-0.4">Ped.</text>
<text x="119.6" y="242.4" font-family='"Liberation Serif",serif' font-size="7.3" font-weight="normal" font-style="normal" text-anchor="middle" fill="#5b5f7a" letter-spacing="-0.5">P.M.</text>
<path d="M10.8 253.100l3.400 3.400M14.2 253.100l-3.400 3.400" stroke="#5b5f7a" stroke-width="0.9" fill="none" />
<rect x="9.95" y="252.25" width="1.500" height="1.500" fill="#5b5f7a"/>
<rect x="13.55" y="252.25" width="1.500" height="1.500" fill="#5b5f7a"/>
<rect x="9.95" y="255.85000000000002" width="1.500" height="1.500" fill="#5b5f7a"/>
<rect x="13.55" y="255.85000000000002" width="1.500" height="1.500" fill="#5b5f7a"/>
<path d="M24.0 249.300l7.400 10.800M31.400000000000002 249.300l-7.400 10.800" stroke="#5b5f7a" stroke-width="1.2" fill="none" />
<path d="M40.0 254.400l3.200-2.700 3.200 2.700-3.200 2.700z" stroke="#5b5f7a" stroke-width="0.7" fill="none" />
<path d="M55.0 254.400l3.300-2.800 3.300 2.800-3.300 2.800z" fill="#5b5f7a" />
<path d="M69.1 259.500c4.500 0 6.500-2 6.500-6.500" stroke="#5b5f7a" stroke-width="0.7" fill="none" />
<path d="M74.19999999999999 253.500h2.800l-1.400-3.300z" fill="#5b5f7a" />
<text x="89.3" y="255.2" font-family='"Liberation Serif",serif' font-size="7.8" font-weight="bold" font-style="italic" text-anchor="middle" fill="#5b5f7a" >x</text>
<path d="M83.6 255.500l5.400 4.300 5.600-4.300" stroke="#5b5f7a" stroke-width="0.6" fill="none" />
<path d="M98.3 254.800q1-1.400 2 0t2 0 2 0 2 0 2 0 2 0" stroke="#5b5f7a" stroke-width="1.1" fill="none" />
<path d="M108.3 262h3v-3z" fill="#5b5f7a" />
<path d="M113.39999999999999 253.300l1.600 3.600 1.600-3.600 1.600 3.600 1.600-3.600 1.600 3.600 1.600-3.600 1.600 3.600" stroke="#5b5f7a" stroke-width="0.6" fill="none" />
<path d="M124 262h3v-3z" fill="#5b5f7a" />
<text x="8.3" y="276.8" font-family='"Liberation Serif",serif' font-size="6.8" font-weight="bold" font-style="italic" text-anchor="middle" fill="#5b5f7a" >x</text>
<path d="M10.30 272.60L11.74 272.25L11.62 270.28L13.59 270.47L13.47 268.50L15.43 268.70L15.31 266.73L17.28 266.92L17.16 264.95L18.60 264.60" stroke="#5b5f7a" stroke-width="0.9" fill="none" />
<text x="23.5" y="268" font-family='"Liberation Serif",serif' font-size="6.8" font-weight="bold" font-style="italic" text-anchor="middle" fill="#5b5f7a" >x</text>
<path d="M25.80 267.60L26.05 269.04L28.01 269.02L27.70 270.96L29.66 270.93L29.34 272.87L31.30 272.84L30.99 274.78L32.95 274.76L33.20 276.20" stroke="#5b5f7a" stroke-width="0.9" fill="none" />
<text x="38" y="273.5" font-family='"Liberation Serif",serif' font-size="5.5" font-weight="normal" font-style="normal" text-anchor="middle" fill="#5b5f7a" >1</text>
<text x="48.2" y="273.5" font-family='"Liberation Serif",serif' font-size="5.5" font-weight="normal" font-style="normal" text-anchor="middle" fill="#5b5f7a" >3</text>
<path d="M39.8 272.300l6.200-1.600" stroke="#5b5f7a" stroke-width="0.6" fill="none" />
<path d="M38.5 267c2-2.500 7-2.500 9 0" stroke="#5b5f7a" stroke-width="0.6" fill="none" />
<text x="53.3" y="273.5" font-family='"Liberation Serif",serif' font-size="5.5" font-weight="normal" font-style="normal" text-anchor="middle" fill="#5b5f7a" >1</text>
<text x="63.5" y="273.5" font-family='"Liberation Serif",serif' font-size="5.5" font-weight="normal" font-style="normal" text-anchor="middle" fill="#5b5f7a" >3</text>
<path d="M55.099999999999994 272.300l6.200-1.600" stroke="#5b5f7a" stroke-width="0.6" fill="none" />
<text x="77.1" y="273.5" font-family='"Liberation Serif",serif' font-size="5.5" font-weight="normal" font-style="normal" text-anchor="middle" fill="#5b5f7a" >3</text>
<path d="M69.1 272.600l6-1.800" stroke="#5b5f7a" stroke-width="0.6" fill="none" />
<text x="92.2" y="273.5" font-family='"Liberation Serif",serif' font-size="5.5" font-weight="normal" font-style="normal" text-anchor="middle" fill="#5b5f7a" >3</text>
<path d="M84.5 270.400l6 1.800" stroke="#5b5f7a" stroke-width="0.6" fill="none" />
<text x="100.7" y="273.5" font-family='"Liberation Serif",serif' font-size="5.5" font-weight="normal" font-style="normal" text-anchor="middle" fill="#5b5f7a" >3</text>
<path d="M102.8 270.600l6 1.800" stroke="#5b5f7a" stroke-width="0.6" fill="none" />
<text x="116.19999999999999" y="273.5" font-family='"Liberation Serif",serif' font-size="5.5" font-weight="normal" font-style="normal" text-anchor="middle" fill="#5b5f7a" >3</text>
<path d="M118.1 272.600l6.200-2" stroke="#5b5f7a" stroke-width="0.6" fill="none" />
<text x="12.600000000000001" y="283.8" font-family='"Liberation Serif",serif' font-size="5" font-weight="bold" font-style="italic" text-anchor="middle" fill="#5b5f7a" >H</text>
<path d="M8.3 286.500c2-2 6-2 8 0" stroke="#5b5f7a" stroke-width="0.6" fill="none" />
<text x="16.9" y="290.8" font-family='"Liberation Serif",serif' font-size="5" font-weight="normal" font-style="normal" text-anchor="middle" fill="#5b5f7a" >3</text>
<text x="27.900000000000002" y="283.8" font-family='"Liberation Serif",serif' font-size="4.8" font-weight="bold" font-style="italic" text-anchor="middle" fill="#5b5f7a" >H/P</text>
<path d="M24.0 287c2-2 5.500-2 7.500 0" stroke="#5b5f7a" stroke-width="0.6" fill="none" />
<text x="22.8" y="290.8" font-family='"Liberation Serif",serif' font-size="5" font-weight="normal" font-style="normal" text-anchor="middle" fill="#5b5f7a" >1</text>
<text x="32.6" y="290.8" font-family='"Liberation Serif",serif' font-size="5" font-weight="normal" font-style="normal" text-anchor="middle" fill="#5b5f7a" >3</text>
<text x="43" y="288.2" font-family='"Liberation Serif",serif' font-size="8" font-weight="normal" font-style="italic" text-anchor="middle" fill="#5b5f7a" letter-spacing="-0.3">tap</text>
<text x="58.3" y="288.2" font-family='"Liberation Serif",serif' font-size="8" font-weight="normal" font-style="italic" text-anchor="middle" fill="#5b5f7a" letter-spacing="-0.3">slap</text>
<text x="73.8" y="288.2" font-family='"Liberation Serif",serif' font-size="8" font-weight="normal" font-style="italic" text-anchor="middle" fill="#5b5f7a" letter-spacing="-0.3">pop</text>
<path d="M-3.300 1.500V-2.600a0.650 0.650 0 0 1 1.300 0V-0.500h0.200V-4.300a0.650 0.650 0 0 1 1.300 0V-0.700h0.200V-4.800a0.650 0.650 0 0 1 1.300 0V-0.600h0.200V-3.900a0.650 0.650 0 0 1 1.300 0V1.200l1.300-1.500c0.600-0.600 1.500 0.100 1 0.900L2.600 4.200C2 5 1.200 5.300 0.300 5.300h-1C-2.300 5.300-3.300 4.300-3.300 2.800z" fill="#5b5f7a" transform="translate(88.7 285.500)"/>
<path d="M-3.300 1.500V-2.600a0.650 0.650 0 0 1 1.300 0V-0.500h0.200V-4.300a0.650 0.650 0 0 1 1.300 0V-0.700h0.200V-4.800a0.650 0.650 0 0 1 1.300 0V-0.600h0.200V-3.900a0.650 0.650 0 0 1 1.300 0V1.200l1.300-1.500c0.600-0.600 1.500 0.100 1 0.900L2.600 4.200C2 5 1.200 5.300 0.300 5.300h-1C-2.300 5.300-3.300 4.300-3.300 2.800z" fill="#5b5f7a" transform="translate(104.6 285.500) scale(-1 1)"/>
<circle cx="119.5" cy="285.500" r="4.300" fill="none" stroke="#5b5f7a" stroke-width="0.6"/>
<text x="119.5" y="287.7" font-family='"Liberation Sans",sans-serif' font-size="6.2" font-weight="normal" font-style="normal" text-anchor="middle" fill="#5b5f7a" >6</text>
<path d="M12.3 305.500v-7" stroke="#5b5f7a" stroke-width="0.7" fill="none" />
<path d="M10.8 299.200h3l-1.500-3.400z" fill="#5b5f7a" />
<path d="M27.6 296v7" stroke="#5b5f7a" stroke-width="0.7" fill="none" />
<path d="M26.1 302.300h3l-1.500 3.400z" fill="#5b5f7a" />
<path d="M43 305.500l-0.900-0.800 1.800-1.200-1.800-1.200 1.800-1.200-0.900-0.900" stroke="#5b5f7a" stroke-width="0.9" fill="none" />
<path d="M41.5 299.200h3l-1.500-3.400z" fill="#5b5f7a" />
<path d="M58.3 296v7" stroke="#5b5f7a" stroke-width="0.7" fill="none" stroke-dasharray="1.300 0.800"/>
<path d="M56.8 302.300h3l-1.500 3.400z" fill="#5b5f7a" />
<text x="73.8" y="303" font-family='"Liberation Serif",serif' font-size="7.2" font-weight="normal" font-style="italic" text-anchor="middle" fill="#5b5f7a" letter-spacing="-0.4">rasg.</text>
<path d="M86 297.500h6.200v6.200h-0.800v-3.800h-4.600v3.800h-0.800z" fill="#5b5f7a" />
<path d="M102.0 297l2.300 6.800 2.300-6.800" stroke="#5b5f7a" stroke-width="0.8" fill="none" />
<ellipse cx="11.100000000000001" cy="318.8" rx="1.7" ry="1.2" transform="rotate(-22 11.100000000000001 318.8)" fill="#5b5f7a"/>
<path d="M12.5 318.600v-7" stroke="#5b5f7a" stroke-width="0.6" fill="none" />
<path d="M12.5 311.600c0.200 1.800 2.200 2 1.800 4.200" stroke="#5b5f7a" stroke-width="0.7" fill="none" />
<path d="M9.8 317l5-3.500" stroke="#5b5f7a" stroke-width="0.5" fill="none" />
<ellipse cx="27.400000000000002" cy="318.8" rx="1.7" ry="1.2" transform="rotate(-22 27.400000000000002 318.8)" fill="#5b5f7a"/>
<path d="M28.8 318.600v-7" stroke="#5b5f7a" stroke-width="0.6" fill="none" />
<path d="M28.8 311.600c0.200 1.800 2.200 2 1.800 4.200" stroke="#5b5f7a" stroke-width="0.7" fill="none" />
<text x="43.3" y="318" font-family='"Liberation Serif",serif' font-size="7.2" font-weight="normal" font-style="italic" text-anchor="middle" fill="#5b5f7a" >tr.</text>
<path d="M55.0 317.200l7-1.800" stroke="#5b5f7a" stroke-width="1.3" fill="none" />
<path d="M63 323h3v-3z" fill="#5b5f7a" />
<path d="M68.1 316.800l2-2.200 1.800 2.600 2-2.600 1.800 2.600 2-2.600 1.600 2" stroke="#5b5f7a" stroke-width="1.2" fill="none" />
<path d="M83.5 316.800l2-2.200 1.800 2.600 2-2.600 1.800 2.600 2-2.600 1.600 2" stroke="#5b5f7a" stroke-width="1.2" fill="none" />
<path d="M89 312.500v6.500" stroke="#5b5f7a" stroke-width="0.6" fill="none" />
<path d="M-2.600 0.300c-0.900 1-2 0.200-1.800-1.100 0.200-1.500 1.800-2.100 3.100-1.300 1.200 0.700 1.800 2.600 3.200 3.500 1.200 0.700 2.600 0 2.600-1.400 0-1.100-1-1.800-1.900-1" fill="none" stroke="#5b5f7a" stroke-width="1.150" stroke-linecap="round" transform="translate(104.1 315.500)"/>
<path d="M-2.600 0.300c-0.900 1-2 0.200-1.800-1.100 0.200-1.500 1.800-2.100 3.100-1.300 1.200 0.700 1.800 2.600 3.200 3.500 1.200 0.700 2.600 0 2.600-1.400 0-1.100-1-1.800-1.900-1" fill="none" stroke="#5b5f7a" stroke-width="1.150" stroke-linecap="round" transform="translate(119.6 315.500) scale(1 -1)"/>
<path d="M15.3 328.600l-5.200 2.700 5.200 2.700" stroke="#5b5f7a" stroke-width="0.8" fill="none" />
<path d="M25.2 328.600l5.200 2.700-5.200 2.700" stroke="#5b5f7a" stroke-width="0.8" fill="none" />
<path d="M37.6 331.300l5.400-3.100 5.400 3.100-5.400 3.100z" stroke="#5b5f7a" stroke-width="0.7" fill="none" />
<circle cx="58.3" cy="327.800" r="2.600" fill="none" stroke="#5b5f7a" stroke-width="0.7"/>
<path d="M53.3 333.300l10-1.600" stroke="#5b5f7a" stroke-width="0.6" fill="none" />
<path d="M53.3 335.200h10.200" stroke="#5b5f7a" stroke-width="1.6" fill="none" />
<path d="M73.3 325.500v5M70.8 328h5" stroke="#5b5f7a" stroke-width="0.7" fill="none" />
<path d="M68.1 333h11" stroke="#5b5f7a" stroke-width="0.6" fill="none" />
<path d="M68.1 335.200h11" stroke="#5b5f7a" stroke-width="1.6" fill="none" />
<ellipse cx="88.7" cy="335.5" rx="1.9" ry="1.4" transform="rotate(-22 88.7 335.5)" fill="#5b5f7a"/>
<path d="M90.3 335.300v-6.500" stroke="#5b5f7a" stroke-width="0.7" fill="none" />
<text x="89.5" y="329.8" font-family='"Liberation Sans",sans-serif' font-size="6" font-weight="normal" font-style="normal" text-anchor="middle" fill="#5b5f7a" >*</text>
<ellipse cx="104.0" cy="331.5" rx="1.9" ry="1.4" transform="rotate(-22 104.0 331.5)" fill="#5b5f7a"/>
<path d="M105.6 331.300v-6.500" stroke="#5b5f7a" stroke-width="0.7" fill="none" />
<path d="M102.3 334.800l3.400 2.800M105.7 334.800l-3.400 2.800" stroke="#5b5f7a" stroke-width="0.6" fill="none" />
<path d="M8.0 348.400h9" stroke="#5b5f7a" stroke-width="1.1" fill="none" />
<path d="M8.0 348.400v9.600M11.0 348.400v9.600M14.0 348.400v9.600M17.0 348.400v9.600M8.0 351.200h9M8.0 354h9M8.0 356.800h9" stroke="#5b5f7a" stroke-width="0.5" fill="none" />
<circle cx="11.0" cy="352.600" r="0.8" fill="#5b5f7a"/>
<path d="M23.3 348.400h9.300v9.600h-9.300zM26.3 348.400v9.600M29.3 348.400v9.600M23.3 351.200h9M23.3 354h9M23.3 356.800h9" stroke="#5b5f7a" stroke-width="0.5" fill="none" />
<rect x="24.0" y="349.2" width="1.600" height="1.200" fill="#5b5f7a"/>
<rect x="27.0" y="352.0" width="1.600" height="1.200" fill="#5b5f7a"/>
<rect x="30.0" y="352.0" width="1.600" height="1.200" fill="#5b5f7a"/>
<rect x="24.0" y="354.79999999999995" width="1.600" height="1.200" fill="#5b5f7a"/>
<rect x="30.0" y="354.79999999999995" width="1.600" height="1.200" fill="#5b5f7a"/>
<path d="M44.5 348.200v7l-3.600 2.800" stroke="#5b5f7a" stroke-width="0.7" fill="none" />
<text x="58.4" y="356.2" font-family='"Liberation Serif",serif' font-size="7.6" font-weight="bold" font-style="normal" text-anchor="middle" fill="#5b5f7a" >BV</text>
<text x="73.5" y="356" font-family='"Liberation Serif",serif' font-size="6.3" font-weight="bold" font-style="normal" text-anchor="middle" fill="#5b5f7a" letter-spacing="-0.3">2:51</text>
<text x="88.6" y="355.8" font-family='"Liberation Serif",serif' font-size="6" font-weight="bold" font-style="normal" text-anchor="middle" fill="#5b5f7a" letter-spacing="-0.4">TXT</text>
<rect x="99.7" y="348.700" width="9.200" height="9.200" rx="1.600" fill="none" stroke="#5b5f7a" stroke-width="0.8"/>
<text x="104.3" y="356" font-family='"Liberation Serif",serif' font-size="6.5" font-weight="normal" font-style="normal" text-anchor="middle" fill="#5b5f7a" >A</text>
<ellipse cx="9.3" cy="369.3" rx="1.6" ry="1.15" transform="rotate(-22 9.3 369.3)" fill="#5b5f7a"/>
<ellipse cx="15.7" cy="369.3" rx="1.6" ry="1.15" transform="rotate(-22 15.7 369.3)" fill="#5b5f7a"/>
<path d="M10.6 369.3V363.6h6.4V369.3" stroke="#5b5f7a" stroke-width="0.7" fill="none" />
<path d="M10.6 364.0h6.4" stroke="#5b5f7a" stroke-width="1.3" fill="none" />
<text x="12.5" y="373.6" font-family='"Liberation Serif",serif' font-size="3.2" font-weight="bold" font-style="normal" text-anchor="middle" fill="#5b5f7a" >AUTO</text>
<ellipse cx="24.200000000000003" cy="371.3" rx="1.6" ry="1.15" transform="rotate(-22 24.200000000000003 371.3)" fill="#5b5f7a"/>
<ellipse cx="30.6" cy="371.3" rx="1.6" ry="1.15" transform="rotate(-22 30.6 371.3)" fill="#5b5f7a"/>
<path d="M25.500000000000004 371.3V364.3h6.4V371.3" stroke="#5b5f7a" stroke-width="0.7" fill="none" />
<path d="M25.500000000000004 364.7h6.4" stroke="#5b5f7a" stroke-width="1.3" fill="none" />
<ellipse cx="39.6" cy="371.3" rx="1.6" ry="1.15" transform="rotate(-22 39.6 371.3)" fill="#5b5f7a"/>
<ellipse cx="45.4" cy="371.3" rx="1.6" ry="1.15" transform="rotate(-22 45.4 371.3)" fill="#5b5f7a"/>
<path d="M40.9 371.300V364.300h2.200M44.4 364.300h2.300V371.300" stroke="#5b5f7a" stroke-width="0.8" fill="none" />
<path d="M53.3 364.300h10.500" stroke="#5b5f7a" stroke-width="1.2" fill="none" />
<path d="M53.599999999999994 364.300v8.300M56.099999999999994 364.300v8.300M58.599999999999994 364.300v8.300M61.099999999999994 364.300v8.300M63.5 364.300v8.300" stroke="#5b5f7a" stroke-width="0.55" fill="none" />
<path d="M56.099999999999994 366.400h2.500M61.099999999999994 366.400h2.400" stroke="#5b5f7a" stroke-width="0.6" fill="none" />
<ellipse cx="71.0" cy="369.8" rx="1.5" ry="1.1" transform="rotate(-22 71.0 369.8)" fill="#5b5f7a"/>
<ellipse cx="76.1" cy="364.5" rx="1.5" ry="1.1" transform="rotate(-22 76.1 364.5)" fill="#5b5f7a"/>
<path d="M72.3 369.800v-6.500M74.89999999999999 364.500v6.200" stroke="#5b5f7a" stroke-width="0.7" fill="none" />
<text x="73.19999999999999" y="373.7" font-family='"Liberation Serif",serif' font-size="3.2" font-weight="bold" font-style="normal" text-anchor="middle" fill="#5b5f7a" >AUTO</text>
<path d="M86.8 372.500v-7" stroke="#5b5f7a" stroke-width="0.7" fill="none" />
<path d="M85.4 366.800h2.800l-1.400-3z" fill="#5b5f7a" />
<ellipse cx="90.6" cy="371.2" rx="1.9" ry="1.4" transform="rotate(-22 90.6 371.2)" fill="#5b5f7a"/>
<path d="M92.2 371v-6.800" stroke="#5b5f7a" stroke-width="0.7" fill="none" />
<ellipse cx="103.5" cy="365" rx="1.9" ry="1.4" transform="rotate(-22 103.5 365)" fill="#5b5f7a"/>
<path d="M101.89999999999999 365.200v7.300" stroke="#5b5f7a" stroke-width="0.7" fill="none" />
<path d="M107.0 364.300v6.700" stroke="#5b5f7a" stroke-width="0.7" fill="none" />
<path d="M105.6 369.800h2.800l-1.400 3z" fill="#5b5f7a" />
<path d="M114.49999999999999 363.800h3.400v2.200l-1.700 1.800-1.700-1.800z" stroke="#5b5f7a" stroke-width="0.7" fill="none" />
<path d="M121.3 363.800h3.400v2.200l-1.700 1.800-1.700-1.800z" stroke="#5b5f7a" stroke-width="0.7" fill="none" />
<path d="M114.19999999999999 372v-1.800h10.800v1.800" stroke="#5b5f7a" stroke-width="0.6" fill="none" />
<path d="M11.500 386.200v4" stroke="#5b5f7a" stroke-width="0.7" fill="none" />
<text x="30.4" y="389.5" font-family='"Liberation Sans",sans-serif' font-size="5.8" font-weight="bold" font-style="normal" text-anchor="middle" fill="#5b5f7a" >M</text>
<text x="45.6" y="389.5" font-family='"Liberation Sans",sans-serif' font-size="5.8" font-weight="bold" font-style="normal" text-anchor="middle" fill="#5b5f7a" >M</text>
<path d="M56.500 389.500v0.800M58.300 388.500v2M60.100 387.500v3M62 386.500v4" stroke="#5b5f7a" stroke-width="0.9" fill="none" />
<path d="M69 387v3.500M71 389v1.500M76.500 388v2.500M78.500 386.500v4" stroke="#5b5f7a" stroke-width="0.9" fill="none" />
</svg><!--/PALETTE-->
</div>

<!-- ===== score ===== -->
<div id="score"></div>
<div id="sc" style="left:0;top:0;width:680px;height:431px">
  <span class="t" style="left:164px;top:99px;font-size:7.500px;font-weight:bold;font-style:italic;color:#0a0a0a;letter-spacing:-0.100px;-webkit-text-stroke:0.350px #0a0a0a;transform-origin:0 0;transform:scaleX(0.900)">S<span style="position:static;font-size:5.700px">TANDARD TUNING</span></span>
  <svg style="left:184px;top:112px" width="8" height="12" viewBox="0 0 8 12"><ellipse cx="3.300" cy="9.300" rx="2" ry="1.400" transform="rotate(-25 3.200 9.300)" fill="#111"/><path d="M5.200 9V1.500" stroke="#111" stroke-width="0.900"/></svg>
  <span class="t" style="left:194.500px;top:114px;font-size:8.300px;font-weight:bold;color:#111;letter-spacing:-0.150px">= 120</span>
  <!-- staff -->
  <svg style="left:145px;top:128px" width="85" height="54" viewBox="0 0 85 54">
    <g stroke="#a9a9a9" stroke-width="0.600" fill="none">
      <path d="M7.500 9.300H78M7.500 12.450H78M7.500 15.600H78M7.500 18.750H78M7.500 21.900H78"/>
      <path d="M7.500 34.400H78M7.500 39.200H78M7.500 44H78M7.500 48.800H78"/>
    </g>
    <path d="M7.700 9v40" stroke="#8a8a8a" stroke-width="0.700"/>
    <path d="M75 9v13.200M75 34.200v15" stroke="#222" stroke-width="0.700"/>
    <path d="M77.700 9v13.200M77.700 34.200v15" stroke="#111" stroke-width="1.300"/>
    <!-- bass clef -->
    <path d="M10.800 13.200c0.200-2.600 2.200-4 4.600-4 2.800 0 4.600 1.800 4.600 4.600 0 4.200-3.600 7.400-8.600 9.400" stroke="#111" stroke-width="1.500" fill="none" stroke-linecap="round"/>
    <circle cx="12.600" cy="13.600" r="1.700" fill="#111"/>
    <circle cx="21.800" cy="11.400" r="0.900" fill="#111"/><circle cx="21.800" cy="15.400" r="0.900" fill="#111"/>
    <!-- time sig -->
    <path d="M30.300 13.400c-0.500-1.500-3.800-1.900-4.600 1.300-0.700 3 1.900 4.900 4.700 2.900" stroke="#111" stroke-width="1.400" fill="none" stroke-linecap="round"/>
    <path d="M31.800 9.600c3.400 3.700 2.600 9.600-1.200 13.800" stroke="#111" stroke-width="1.300" fill="none" stroke-linecap="round"/>
    <!-- cursor -->
    <rect x="40" y="9" width="5.600" height="6" rx="0.800" fill="#d6bd62" stroke="#a89040" stroke-width="0.500"/>
    <path d="M42.300 15.200l0.400 4.600" stroke="#c9b46a" stroke-width="0.600"/>
  </svg>
  <span class="t" style="left:182px;top:131px;font-size:4px;color:#c9b46a">1</span>
  <span class="t" style="left:144.500px;top:163px;font-size:4.700px;font-weight:bold;color:#0a0a0a;-webkit-text-stroke:0.250px #0a0a0a;transform-origin:0 0;transform:rotate(-90deg)">A.B.</span>
  <span class="t" style="left:159.500px;top:161.500px;font-size:5.500px;font-weight:bold;color:#0a0a0a;-webkit-text-stroke:0.200px #0a0a0a;line-height:5.100px;white-space:normal;width:4px;text-align:center">T A B</span>
</div>
<div style="left:534px;top:66px;width:3px;height:324px;background:#6c6c6c"></div>
<div style="left:534px;top:66px;width:3px;height:163px;background:#a3b1c6"></div>
<div style="left:132px;top:386px;width:402px;height:4px;background:#6c6c6c"></div>
<div style="left:132px;top:386px;width:363px;height:4px;background:#a3b1c6"></div>


<!-- ===== lyrics dialog ===== -->
<div id="dlg" style="left:244.500px;top:95.500px;width:158.500px;height:224px;background:#272834;box-shadow:0 0 0 0.600px #c4c4c4,0 2px 7px rgba(0,0,0,0.280)">
  <div style="left:0;top:0;width:158.500px;height:12px;background:#f3f3f3"></div>
  <span class="t" style="left:3.500px;top:3.500px;font-size:5.200px;color:#a4a4a4;letter-spacing:-0.100px">歌词 - Guitar Pro 8</span>
  <div style="left:149.500px;top:2.500px;width:8px;height:9px;background:#e2e2e2"></div>
  <svg style="left:151.500px;top:5px" width="4" height="4" viewBox="0 0 4 4"><path d="M0.500 0.500l3 3M3.500 0.500l-3 3" stroke="#f6f6f6" stroke-width="0.700"/></svg>
  <span class="t serif" style="left:7.500px;top:22px;font-size:8.900px;font-weight:600;color:#f2f2f6">歌词</span>
  <svg style="left:99.500px;top:22.500px" width="7" height="7" viewBox="0 0 14 14"><circle cx="7" cy="7" r="6.800" fill="#f4f4f8"/><rect x="6" y="6" width="2.200" height="5" fill="#272834"/><rect x="5" y="6" width="2" height="1.200" fill="#272834"/><rect x="5" y="10" width="4.200" height="1.200" fill="#272834"/><circle cx="7" cy="3.700" r="1.300" fill="#272834"/></svg>
  <span class="t" style="left:110.500px;top:22.500px;font-size:6.770px;color:#d8d9e2">歌词编辑语法</span>
  <span class="t" style="left:7.500px;top:46.300px;font-size:6.500px;color:#cfd1dc">声部线</span>
  <div style="left:30.500px;top:41.500px;width:70px;height:13.500px;background:#4a506b;border-radius:4px"></div>
  <div style="left:30.500px;top:41.500px;width:14px;height:13.500px;background:#4e8df2;border-radius:4px 0 0 4px"></div>
  <div style="left:44.500px;top:41.500px;width:0.800px;height:13.500px;background:#272834"></div>
  <div style="left:58.500px;top:41.500px;width:0.800px;height:13.500px;background:#272834"></div>
  <div style="left:72.500px;top:41.500px;width:0.800px;height:13.500px;background:#272834"></div>
  <div style="left:86.500px;top:41.500px;width:0.800px;height:13.500px;background:#272834"></div>
  <span class="t" style="left:30.500px;width:14px;text-align:center;top:45.200px;font-size:6.700px;color:#fff">1</span>
  <span class="t" style="left:45px;width:14px;text-align:center;top:45.200px;font-size:6.700px;color:#e6e8f0">2</span>
  <span class="t" style="left:59px;width:14px;text-align:center;top:45.200px;font-size:6.700px;color:#e6e8f0">3</span>
  <span class="t" style="left:73px;width:14px;text-align:center;top:45.200px;font-size:6.700px;color:#e6e8f0">4</span>
  <span class="t" style="left:87px;width:14px;text-align:center;top:45.200px;font-size:6.700px;color:#e6e8f0">5</span>
  <span class="t" style="left:7.500px;top:62.300px;font-size:6.500px;color:#cfd1dc">从小节</span>
  <div style="left:30.500px;top:59px;width:19.500px;height:12px;background:#4a506b;border-radius:3.500px"></div>
  <div style="left:31.500px;top:60px;width:8.500px;height:10px;background:#08080b;border-radius:2.500px 0 0 2.500px"></div>
  <span class="t" style="left:33.500px;top:61.500px;font-size:7px;color:#f0f1f6">1</span>
  <svg style="left:42.300px;top:60.300px" width="5.600" height="9.400" viewBox="0 0 10 16"><path d="M1 6l4-4.500 4 4.500zM1 10l4 4.500 4-4.500z" fill="#f0f1f6"/></svg>
  <span class="t" style="left:14px;top:77.300px;font-size:6.500px;color:#cfd1dc">显示</span>
  <div style="left:30.500px;top:75px;width:18px;height:9px;background:#4e8df2;border-radius:4.500px"></div>
  <div style="left:41.500px;top:76.800px;width:5.400px;height:5.400px;background:#fff;border-radius:50%"></div>
  <span class="t" style="left:52.500px;top:77.200px;font-size:6.800px;color:#e8e9f0">On</span>
  <!-- edit buttons -->
  <div style="left:7px;top:93.500px;width:38.500px;height:12.500px;background:#3a3e54;border-radius:4px"></div>
  <div style="left:26px;top:93.500px;width:0.800px;height:12.500px;background:#2b2d3c"></div>
  <div style="left:53px;top:93.500px;width:59px;height:12.500px;background:#3a3e54;border-radius:4px"></div>
  <div style="left:72.700px;top:93.500px;width:19.600px;height:12.500px;background:#4a506b"></div>
  <div style="left:72.500px;top:93.500px;width:0.800px;height:12.500px;background:#2b2d3c"></div>
  <div style="left:92.300px;top:93.500px;width:0.800px;height:12.500px;background:#2b2d3c"></div>
  <svg style="left:11.500px;top:95.500px" width="10" height="9" viewBox="0 0 20 18"><path d="M7 3L2.500 7.200 7 11.500M3 7.200h9.500c5.500 0 5.500 8-0.500 8H9.500" stroke="#575d7e" stroke-width="1.700" fill="none"/></svg>
  <svg style="left:30.500px;top:95.500px" width="10" height="9" viewBox="0 0 20 18"><path d="M13 3l4.500 4.200L13 11.500M17 7.200H7.500c-5.500 0-5.500 8 0.500 8h2.500" stroke="#575d7e" stroke-width="1.700" fill="none"/></svg>
  <svg style="left:57.500px;top:95px" width="10" height="10" viewBox="0 0 20 20"><path d="M2.500 2.500h7v11h-7zM9.500 6h5l3 3v8.500h-8z" stroke="#575d7e" stroke-width="1.500" fill="none"/></svg>
  <svg style="left:77.500px;top:95px" width="10" height="10" viewBox="0 0 20 20"><path d="M2 4h3.500c0-2.600 5-2.600 5 0H14v5H9.500v9H2z" fill="#f4f4f8"/><path d="M11 10.500h4.500l3 3v5.500H11z" fill="#f4f4f8"/><rect x="13" y="14" width="3.500" height="3" fill="#4a506b"/></svg>
  <svg style="left:97.500px;top:95px" width="10" height="10" viewBox="0 0 20 20"><path d="M5 1.500l8 12M15 1.500l-8 12" stroke="#575d7e" stroke-width="1.500" fill="none"/><circle cx="5.500" cy="15.500" r="2.600" stroke="#575d7e" stroke-width="1.500" fill="none"/><circle cx="14.500" cy="15.500" r="2.600" stroke="#575d7e" stroke-width="1.500" fill="none"/></svg>
  <!-- text area -->
  <div style="left:6.700px;top:110px;width:144.800px;height:107.700px;background:#0a0a0d;border:1px solid #383d56;border-radius:3.500px"></div>
</div>

<!-- ===== right panel ===== -->
<div id="right"></div>
<div id="rp" style="left:0;top:0;width:680px;height:431px">
  <div style="left:537px;top:65px;width:1px;height:325px;background:#1d1e27"></div>
  <div style="left:538px;top:66px;width:71px;height:13.500px;background:#4e8df2"></div>
  <div style="left:609px;top:66px;width:71px;height:13.500px;background:#4a506b"></div>
  <span class="t" style="left:538px;width:71px;text-align:center;top:70px;font-size:6px;font-weight:bold;color:#fff">曲目</span>
  <span class="t" style="left:609px;width:71px;text-align:center;top:70px;font-size:6px;font-weight:bold;color:#eef0f6">音轨</span>
  <span class="t serif" style="left:543px;top:88px;font-size:8.800px;font-weight:600;color:#f2f2f6">信息</span>
  <span class="t" style="left:543px;top:102.700px;font-size:6.700px;color:#d8d9e2">标题:</span>
  <div style="left:542px;top:112.500px;width:132.500px;height:13px;background:#0b0b0f;border:1px solid #3c415a;border-radius:3px"></div>
  <span class="t" style="left:543px;top:131.200px;font-size:6.700px;color:#d8d9e2">艺人:</span>
  <div style="left:542px;top:141px;width:132.500px;height:13px;background:#0b0b0f;border:1px solid #3c415a;border-radius:3px"></div>
  <span class="t" style="left:543px;top:159.800px;font-size:6.800px;color:#4a4f69">Ctrl+Return 可建立新的一…</span>
  <div style="left:631px;top:157.500px;width:43.500px;height:11px;background:#4a506b;border-radius:3.500px"></div>
  <span class="t" style="left:638px;top:160px;font-size:6.500px;color:#f0f1f6">显示更多</span>
  <svg style="left:665px;top:161.500px" width="5" height="4" viewBox="0 0 5 4"><path d="M0.500 0.800h4L2.500 3.200z" fill="#f0f1f6"/></svg>

  <span class="t serif" style="left:543px;top:177px;font-size:9px;font-weight:600;color:#f2f2f6">记谱法</span>
  <span class="t" style="left:543px;top:192.500px;font-size:6.700px;color:#d8d9e2">显示实际演奏调性</span>
  <div style="left:600px;top:190.500px;width:18px;height:9.500px;background:#4a506b;border-radius:5px"></div>
  <div style="left:601.500px;top:193px;width:5px;height:5px;background:#fff;border-radius:50%"></div>
  <span class="t" style="left:622px;top:192.500px;font-size:6.800px;color:#e8e9f0">Off</span>
  <span class="t" style="left:570px;top:208px;font-size:6.700px;color:#4a4f69">样式表单</span>
  <div style="left:600px;top:204.500px;width:28.500px;height:13px;background:#363a50;border-radius:3.500px"></div>
  <span class="t" style="left:606px;top:208px;font-size:6.700px;color:#50567a">打开...</span>

  <span class="t serif" style="left:543px;top:234.600px;font-size:9.100px;font-weight:600;color:#f2f2f6">母带后期处理</span>
  <span class="t" style="left:543px;top:249.500px;font-size:6.730px;color:#d8d9e2">设置总音轨输出的后期处理</span>
  <div style="left:542px;top:260.30px;width:132.500px;height:13.500px;background:#4a506b;border-radius:3.500px"></div>
  <div style="left:556.500px;top:260.30px;width:1px;height:13.500px;background:#33364a"></div>
  <div style="left:646px;top:260.30px;width:1px;height:13.500px;background:#33364a"></div>
  <div style="left:660.500px;top:260.30px;width:1px;height:13.500px;background:#33364a"></div>
  <svg style="left:545px;top:264.50px" width="9.500" height="5.500" viewBox="0 0 19 11"><rect width="19" height="11" rx="1.500" fill="#f4f4f8"/><path d="M2 8c1.500-5 5-5 6.500 0" stroke="#4a506b" stroke-width="1.600" fill="none"/><path d="M11.500 2v7M15 2v7" stroke="#4a506b" stroke-width="1.600"/><rect x="10" y="5" width="3" height="2" fill="#4a506b"/><rect x="13.500" y="3" width="3" height="2" fill="#4a506b"/></svg>
  <span class="t" style="left:562.500px;top:264.60px;font-size:6.800px;color:#f0f1f6">Analog</span>
  <svg style="left:635px;top:263.00px" width="5.500" height="8" viewBox="0 0 11 16"><path d="M1.500 6l4-4 4 4M1.500 10l4 4 4-4" stroke="#eceef5" stroke-width="1.700" fill="none"/></svg>
  <svg style="left:649.500px;top:263.00px" width="8" height="8" viewBox="0 0 16 16"><path d="M5.300 3.800a5.500 5.500 0 1 0 5.400 0M8 1.500v6" stroke="#4c6f78" stroke-width="1.500" fill="none"/></svg>
  <svg style="left:667px;top:263.50px" width="2" height="7" viewBox="0 0 4 14"><rect x="0.500" y="0.500" width="3" height="3" fill="#eceef5"/><rect x="0.500" y="5.500" width="3" height="3" fill="#eceef5"/><rect x="0.500" y="10.500" width="3" height="3" fill="#eceef5"/></svg>
  <div style="left:542px;top:275.15px;width:132.500px;height:13.500px;background:#4a506b;border-radius:3.500px"></div>
  <div style="left:556.500px;top:275.15px;width:1px;height:13.500px;background:#33364a"></div>
  <div style="left:646px;top:275.15px;width:1px;height:13.500px;background:#33364a"></div>
  <div style="left:660.500px;top:275.15px;width:1px;height:13.500px;background:#33364a"></div>
  <svg style="left:545px;top:279.35px" width="9.500" height="5.500" viewBox="0 0 19 11"><rect width="19" height="11" rx="1.500" fill="#f4f4f8"/><path d="M2 8c1.500-5 5-5 6.500 0" stroke="#4a506b" stroke-width="1.600" fill="none"/><path d="M11.500 2v7M15 2v7" stroke="#4a506b" stroke-width="1.600"/><rect x="10" y="5" width="3" height="2" fill="#4a506b"/><rect x="13.500" y="3" width="3" height="2" fill="#4a506b"/></svg>
  <span class="t" style="left:562.500px;top:279.45px;font-size:6.800px;color:#f0f1f6">Studio</span>
  <svg style="left:635px;top:277.85px" width="5.500" height="8" viewBox="0 0 11 16"><path d="M1.500 6l4-4 4 4M1.500 10l4 4 4-4" stroke="#eceef5" stroke-width="1.700" fill="none"/></svg>
  <svg style="left:649.500px;top:277.85px" width="8" height="8" viewBox="0 0 16 16"><path d="M5.300 3.800a5.500 5.500 0 1 0 5.400 0M8 1.500v6" stroke="#4c6f78" stroke-width="1.500" fill="none"/></svg>
  <svg style="left:667px;top:278.35px" width="2" height="7" viewBox="0 0 4 14"><rect x="0.500" y="0.500" width="3" height="3" fill="#eceef5"/><rect x="0.500" y="5.500" width="3" height="3" fill="#eceef5"/><rect x="0.500" y="10.500" width="3" height="3" fill="#eceef5"/></svg>
  <div style="left:542px;top:290.00px;width:132.500px;height:13.500px;background:#4a506b;border-radius:3.500px"></div>
  <div style="left:556.500px;top:290.00px;width:1px;height:13.500px;background:#33364a"></div>
  <div style="left:646px;top:290.00px;width:1px;height:13.500px;background:#33364a"></div>
  <div style="left:660.500px;top:290.00px;width:1px;height:13.500px;background:#33364a"></div>
  <svg style="left:545px;top:294.20px" width="9.500" height="5.500" viewBox="0 0 19 11"><rect width="19" height="11" rx="1.500" fill="#f4f4f8"/><path d="M2 8c1.500-5 5-5 6.500 0" stroke="#4a506b" stroke-width="1.600" fill="none"/><path d="M11.500 2v7M15 2v7" stroke="#4a506b" stroke-width="1.600"/><rect x="10" y="5" width="3" height="2" fill="#4a506b"/><rect x="13.500" y="3" width="3" height="2" fill="#4a506b"/></svg>
  <span class="t" style="left:562.500px;top:294.30px;font-size:6.800px;color:#f0f1f6">10-Band</span>
  <svg style="left:635px;top:292.70px" width="5.500" height="8" viewBox="0 0 11 16"><path d="M1.500 6l4-4 4 4M1.500 10l4 4 4-4" stroke="#eceef5" stroke-width="1.700" fill="none"/></svg>
  <svg style="left:649.500px;top:292.70px" width="8" height="8" viewBox="0 0 16 16"><path d="M5.300 3.800a5.500 5.500 0 1 0 5.400 0M8 1.500v6" stroke="#4c6f78" stroke-width="1.500" fill="none"/></svg>
  <svg style="left:667px;top:293.20px" width="2" height="7" viewBox="0 0 4 14"><rect x="0.500" y="0.500" width="3" height="3" fill="#eceef5"/><rect x="0.500" y="5.500" width="3" height="3" fill="#eceef5"/><rect x="0.500" y="10.500" width="3" height="3" fill="#eceef5"/></svg>
  <div style="left:619.500px;top:307.500px;width:55px;height:12.500px;background:#353950;border-radius:3.500px"></div>
  <span class="t" style="left:624.500px;top:310.500px;font-size:6.650px;color:#4c5273">显示单块矩阵...</span>
</div>

<!-- ===== bottom ===== -->
<div id="bottom"></div>
<div id="bt" style="left:0;top:0;width:680px;height:431px">
  <div style="left:0;top:390px;width:680px;height:13px;background:#1d1e26"></div>
  <div style="left:0;top:403px;width:680px;height:14px;background:#2c2d3a"></div>
  <div style="left:0;top:403px;width:308px;height:14px;background:#3b3e51"></div>
  <div style="left:308px;top:403px;width:1px;height:14px;background:#24252f"></div>
  <div style="left:309px;top:403px;width:13px;height:14px;background:#3a3c4c"></div>
  <div style="left:0;top:417px;width:680px;height:14px;background:#1f2029"></div>
  <div style="left:0.800px;top:403px;width:2.200px;height:14px;background:#e6ca63"></div>
  <svg style="left:6.500px;top:393.500px" width="7" height="7" viewBox="0 0 7 7"><path d="M3.500 0v7M0 3.500h7" stroke="#f4f4f8" stroke-width="1.300"/></svg>
  <span class="t" style="left:31px;top:394px;font-size:6.500px;color:#e4e5ee">音轨</span>
  <svg style="left:48.800px;top:394px" width="2" height="7" viewBox="0 0 4 14"><rect x="0.700" y="0" width="2.600" height="2.600" fill="#e4e5ee"/><rect x="0.700" y="5" width="2.600" height="2.600" fill="#e4e5ee"/><rect x="0.700" y="10" width="2.600" height="2.600" fill="#e4e5ee"/></svg>
  <svg style="left:98.500px;top:394px" width="17" height="6" viewBox="0 0 17 6"><path d="M0.500 1l3.300 3.500L7.100 1M9.500 4.500L12.800 1l3.300 3.500" stroke="#0f1015" stroke-width="1.100" fill="none"/></svg>
  <svg style="left:120.500px;top:392.500px" width="9" height="8" viewBox="0 0 9 8"><path d="M1 0.500v7M3 0.500v7" stroke="#101116" stroke-width="0.800" fill="none"/><path d="M3 2.500h5.500v2.500H3z" fill="#101116"/></svg>
<svg style="left:138.5px;top:392.5px" width="9" height="8" viewBox="0 0 18 16"><path d="M1 5.500h4l5-4v13l-5-4H1z" fill="#46606c"/><path d="M12 4.500c2 1.500 2 5.500 0 7" stroke="#46606c" stroke-width="1.500" fill="none"/><path d="M2 15L16 1" stroke="#46606c" stroke-width="1.800"/></svg><svg style="left:150.5px;top:392px" width="10" height="9" viewBox="0 0 20 18"><path d="M3 12V9.500a7 7 0 0 1 14 0V12" stroke="#46606c" stroke-width="2" fill="none"/><rect x="1" y="10" width="5" height="7.500" rx="2" fill="#46606c"/><rect x="14" y="10" width="5" height="7.500" rx="2" fill="#46606c"/></svg>
  <span class="t" style="left:203px;top:394.200px;font-size:6.300px;color:#e4e5ee">音量</span>
  <span class="t" style="left:265.500px;top:394.200px;font-size:6.300px;color:#e4e5ee">相位</span>
  <span class="t" style="left:288.500px;top:394.500px;font-size:5.100px;color:#e4e5ee;letter-spacing:-0.100px">均衡器</span>
  <svg style="left:312.500px;top:390.500px" width="5" height="3" viewBox="0 0 5 3"><path d="M0 0.300h5L2.500 2.800z" fill="#4e8df2"/></svg>
  <span class="t" style="left:313.500px;top:394.500px;font-size:6.500px;color:#e4e5ee">1</span>
  <!-- track row -->
  <svg style="left:7.500px;top:405px" width="6" height="10" viewBox="0 0 12 20"><path d="M8.500 0.300c1.400-0.300 2.600 0.600 2.500 2l-0.700 3c1.200 2 1 4.600 0.400 6.800-0.600 2.400-1.400 4.400-2.800 6-1.200 1.300-3 1.500-4.400 0.800l0.900-1.500-2.400 0.300 1.200-2-2.600 0.100 1.500-2-2.300-0.300 2-1.800-1.800-0.700 2.600-1.400-1-1 2.800-0.900 0.600-2.400 1.800-1.200 0.400-2.300z" fill="#fff"/></svg>
  <span class="t" style="left:24px;top:407.800px;font-size:6.450px;color:#f2f3f7"><span style="position:static;color:#6e7495">1. </span>Acoustic Bass</span>
  <svg style="left:120px;top:406.500px" width="10" height="7" viewBox="0 0 20 14"><path d="M0.500 7c5-8.500 14-8.500 19 0-5 8.500-14 8.500-19 0z" fill="#fff"/><circle cx="10" cy="7" r="3.600" fill="#3b3e51"/><circle cx="10" cy="7" r="1.800" fill="#fff"/></svg>
<svg style="left:138.5px;top:406px" width="9" height="8" viewBox="0 0 18 16"><path d="M1 5.500h4l5-4v13l-5-4H1z" fill="#4a5f72"/><path d="M12 4.500c2 1.500 2 5.500 0 7" stroke="#4a5f72" stroke-width="1.500" fill="none"/><path d="M2 15L16 1" stroke="#4a5f72" stroke-width="1.800"/></svg><svg style="left:150.5px;top:405.5px" width="10" height="9" viewBox="0 0 20 18"><path d="M3 12V9.500a7 7 0 0 1 14 0V12" stroke="#4a5f72" stroke-width="2" fill="none"/><rect x="1" y="10" width="5" height="7.500" rx="2" fill="#4a5f72"/><rect x="14" y="10" width="5" height="7.500" rx="2" fill="#4a5f72"/></svg>
  <div style="left:167px;top:408px;width:65px;height:4px;background:#0c0c10"></div>
  <div style="left:233px;top:408px;width:6px;height:4px;background:#0c0c10"></div>
  <div style="left:213.700px;top:404.700px;width:3.300px;height:10.600px;background:#f0f0f2;border-radius:0.800px"></div>
  <span class="t" style="left:243.500px;top:405.500px;font-size:8.700px;font-weight:bold;color:#0b0b10;-webkit-text-stroke:0.300px #0b0b10">A</span>
<svg style="left:259.6px;top:403.8px" width="12" height="12" viewBox="-6 -6 12 12"><circle cx="0" cy="0.200" r="4.200" fill="#14151b"/><path d="M-3.600 3.800A5.200 5.200 0 1 1 3.600 3.800" stroke="#aeb6d8" stroke-width="1.100" fill="none"/><path d="M0 -5.600v3.600" stroke="#fff" stroke-width="1.300"/></svg>
  <span class="t" style="left:276px;top:405.500px;font-size:8.700px;font-weight:bold;color:#0b0b10;-webkit-text-stroke:0.300px #0b0b10">A</span>
  <svg style="left:292px;top:405.500px" width="9" height="9" viewBox="0 0 18 18"><path d="M3 1v16M9 1v16M15 1v16" stroke="#4f7482" stroke-width="1.400"/><path d="M0.800 11h4.400M6.800 5.500h4.400M12.800 8.500h4.400" stroke="#4f7482" stroke-width="2"/></svg>
  <div style="left:311px;top:406px;width:9px;height:8.300px;background:#121318;border-radius:0.800px"></div>
  <!-- master row -->
  <span class="t" style="left:31px;top:420.800px;font-size:6.400px;color:#e4e5ee">主控台</span>
<svg style="left:143.5px;top:418.2px" width="12" height="12" viewBox="-6 -6 12 12"><circle cx="0" cy="0.200" r="4.200" fill="#14151b"/><path d="M-3.600 3.800A5.200 5.200 0 1 1 3.600 3.800" stroke="#aeb6d8" stroke-width="1.100" fill="none"/><path d="M0 -5.600v3.600" stroke="#fff" stroke-width="1.300"/></svg>
  <div style="left:167px;top:421.500px;width:65px;height:4px;background:#0c0c10"></div>
  <div style="left:233px;top:421.500px;width:6px;height:4px;background:#0c0c10"></div>
  <div style="left:213.700px;top:418px;width:3.300px;height:10.600px;background:#f0f0f2;border-radius:0.800px"></div>
  <span class="t" style="left:243.500px;top:419px;font-size:8.700px;font-weight:bold;color:#111218;-webkit-text-stroke:0.300px #111218">A</span>
<svg style="left:259.6px;top:417.6px" width="12" height="12" viewBox="-6 -6 12 12"><circle cx="0" cy="0.200" r="4.200" fill="#14151b"/><path d="M-3.600 3.800A5.200 5.200 0 1 1 3.600 3.800" stroke="#aeb6d8" stroke-width="1.100" fill="none"/><path d="M0 -5.600v3.600" stroke="#fff" stroke-width="1.300"/></svg>
  <span class="t" style="left:276px;top:419px;font-size:8.700px;font-weight:bold;color:#111218;-webkit-text-stroke:0.300px #111218">A</span>
</div>

<div style="left:0;top:0;width:0.900px;height:431px;background:linear-gradient(#d2d2d2,#c4c4c4 12px,#9a9a9a 13px,#7a7a7a 70px,#6a6a6a)"></div>
<svg style="left:0;top:0" width="5" height="5" viewBox="0 0 5 5"><path d="M0 0h5v1H4A3 3 0 0 0 1 4v1H0z" fill="#d6d6d6"/></svg>
<div style="left:678.900px;top:0;width:1.100px;height:431px;background:linear-gradient(#d4d4d4,#707070 30px,#85858a 120px,#8a8a8a)"></div>
<div style="left:0;top:429.500px;width:680px;height:1.500px;background:#8a8a8a"></div>
<svg style="left:0;top:425px" width="6" height="6" viewBox="0 0 6 6"><path d="M0 0v6h6V4.500H5A4.200 4.200 0 0 1 0.800 0.300V0z" fill="#8a8a8a"/></svg>
<svg style="left:674px;top:425px" width="6" height="6" viewBox="0 0 6 6"><path d="M6 0v6H0V4.500h0.900A4 4 0 0 0 4.900 0.500V0z" fill="#8a8a8a"/></svg>
<svg style="left:675px;top:0" width="5" height="5" viewBox="0 0 5 5"><path d="M5 0v5H3.900V4A3.300 3.300 0 0 0 0.600 0.700H0V0z" fill="#dcdcdc"/></svg>
</div>
</body>
</html>
